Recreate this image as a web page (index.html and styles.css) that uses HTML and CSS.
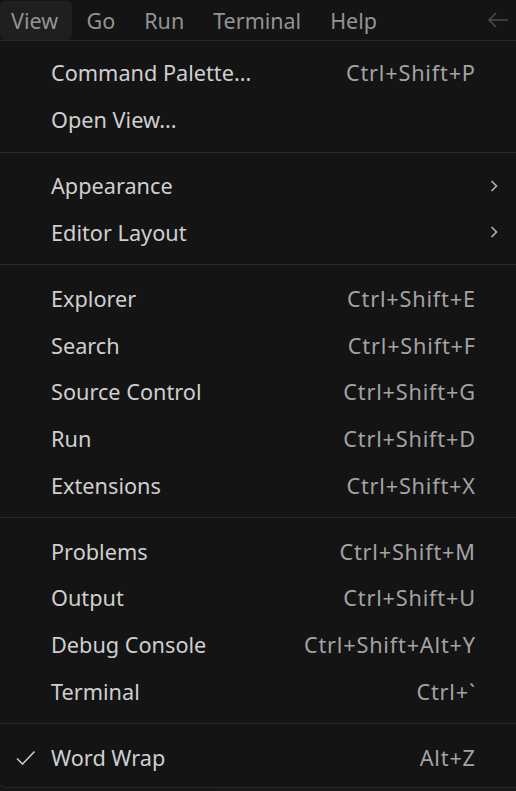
FILE: index.html
```html
<!DOCTYPE html>
<html>
<head>
<meta charset="utf-8">
<link rel="stylesheet" href="styles.css">
</head>
<body>
<div class="menubar">
  <div class="mb-item active">View</div>
  <div class="mb-item">Go</div>
  <div class="mb-item">Run</div>
  <div class="mb-item">Terminal</div>
  <div class="mb-item">Help</div>
  <div class="mb-spacer"></div>
  <svg class="back" width="24" height="20" viewBox="0 0 24 20"><path d="M22 10H3M10 3L3 10L10 17" fill="none" stroke="#4a4a4a" stroke-width="1.6"/></svg>
</div>
<div class="menu">
  <div class="item"><span class="check"></span><span class="label">Command Palette...</span><span class="key">Ctrl+Shift+P</span><span class="sub"></span></div>
  <div class="item"><span class="check"></span><span class="label">Open View...</span><span class="key"></span><span class="sub"></span></div>
  <div class="sep"></div>
  <div class="item"><span class="check"></span><span class="label">Appearance</span><span class="key"></span><span class="sub"><svg width="10" height="14" viewBox="0 0 10 14"><path d="M2.5 2L7.5 7L2.5 12" fill="none" stroke="#b0b0b0" stroke-width="1.7"/></svg></span></div>
  <div class="item"><span class="check"></span><span class="label">Editor Layout</span><span class="key"></span><span class="sub"><svg width="10" height="14" viewBox="0 0 10 14"><path d="M2.5 2L7.5 7L2.5 12" fill="none" stroke="#b0b0b0" stroke-width="1.7"/></svg></span></div>
  <div class="sep"></div>
  <div class="item"><span class="check"></span><span class="label">Explorer</span><span class="key">Ctrl+Shift+E</span><span class="sub"></span></div>
  <div class="item"><span class="check"></span><span class="label">Search</span><span class="key">Ctrl+Shift+F</span><span class="sub"></span></div>
  <div class="item"><span class="check"></span><span class="label">Source Control</span><span class="key">Ctrl+Shift+G</span><span class="sub"></span></div>
  <div class="item"><span class="check"></span><span class="label">Run</span><span class="key">Ctrl+Shift+D</span><span class="sub"></span></div>
  <div class="item"><span class="check"></span><span class="label">Extensions</span><span class="key">Ctrl+Shift+X</span><span class="sub"></span></div>
  <div class="sep"></div>
  <div class="item"><span class="check"></span><span class="label">Problems</span><span class="key">Ctrl+Shift+M</span><span class="sub"></span></div>
  <div class="item"><span class="check"></span><span class="label">Output</span><span class="key">Ctrl+Shift+U</span><span class="sub"></span></div>
  <div class="item"><span class="check"></span><span class="label">Debug Console</span><span class="key">Ctrl+Shift+Alt+Y</span><span class="sub"></span></div>
  <div class="item"><span class="check"></span><span class="label">Terminal</span><span class="key">Ctrl+`</span><span class="sub"></span></div>
  <div class="sep"></div>
  <div class="item"><span class="check"><svg width="22" height="18" viewBox="0 0 22 18"><path d="M2 9.5L7.5 15L19.5 2.5" fill="none" stroke="#c8c8c8" stroke-width="1.6"/></svg></span><span class="label">Word Wrap</span><span class="key">Alt+Z</span><span class="sub"></span></div>
</div>
<div class="below"><div class="below-left"></div><div class="below-right"></div></div>
</body>
</html>
```

FILE: styles.css
```css
html, body {
  margin: 0;
  padding: 0;
  background: #141414;
  width: 516px;
  height: 791px;
  overflow: hidden;
  font-family: "Noto Sans", "Open Sans", sans-serif;
}
.menubar {
  border-bottom: 1px solid #262626;
  display: flex;
  align-items: stretch;
  padding-top: 1px;
  box-sizing: border-box;
  height: 41px;
  background: #141414;
}
.mb-item {
  color: #939393;
  font-size: 21.5px;
  display: flex;
  align-items: center;
  padding: 0 14.5px 0 14.5px;
  border-radius: 6px;
}
.mb-item.active {
  background: #1f1f1f;
  padding-left: 11px;
  padding-right: 14px;
}
.mb-spacer { flex: 1; }
.back {
  align-self: center;
  margin-right: 6px;
  margin-top: -2px;
}
.menu {
  background: #141414;
  padding: 9px 0 6px 0;
  border-bottom: 1px solid #262626;
  border-left: 1px solid #262626;
  border-bottom-left-radius: 6px;
  margin-left: -1px;
}
.item {
  height: 46.67px;
  display: flex;
  align-items: center;
  font-size: 21.7px;
  padding-bottom: 1px;
  box-sizing: border-box;
}
.check {
  width: 51px;
  display: flex;
  justify-content: flex-end;
  padding-right: 14px;
  box-sizing: border-box;
  padding-top: 2px;
}
.label {
  color: #cfcfcf;
  flex: 1;
}
.key {
  color: #a3a3a3;
  letter-spacing: 0.8px;
  margin-right: -0.8px;
}
.sub {
  width: 41px;
  display: flex;
  justify-content: flex-end;
  padding-right: 17px;
  box-sizing: border-box;
  margin-top: 0;
}
.sep {
  height: 19.5px;
  display: flex;
  align-items: center;
}
.sep::before {
  content: "";
  display: block;
  width: 100%;
  height: 1px;
  background: #2a2a2a;
  margin-top: -2px;
}
.below {
  display: flex;
  height: 10px;
}
.below-left { width: 218px; background: #161616; }
.below-right { flex: 1; background: #181818; }
```
